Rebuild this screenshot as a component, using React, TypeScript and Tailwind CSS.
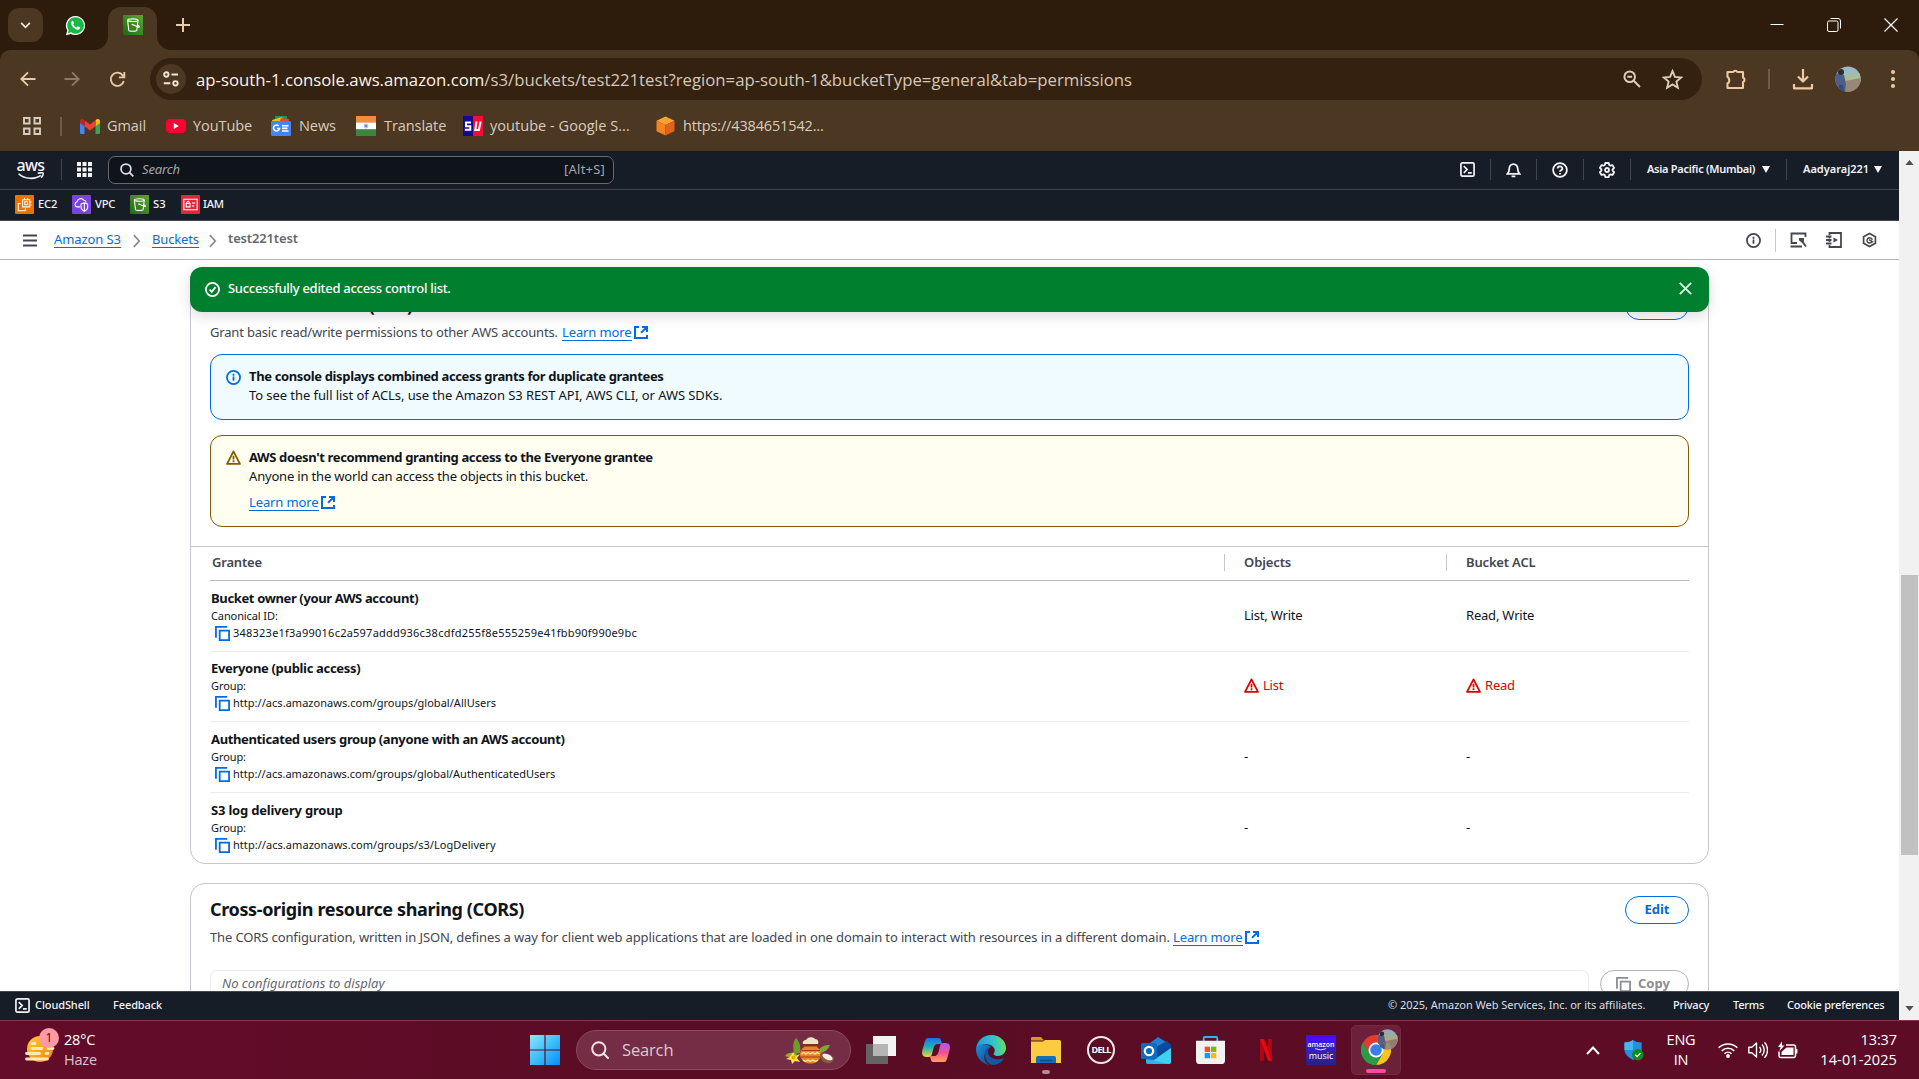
import type { ReactNode } from "react";

/* ---------- shared icons ---------- */

function BucketGlyph({ className }: { className?: string }) {
  return (
    <svg viewBox="0 0 20 20" className={className} fill="none" stroke="#fff" strokeWidth="1.1">
      <path d="M4.600 5.200 5.800 15.400C6 16.600 13.600 16.600 13.800 15.400L15 5.200" />
      <ellipse cx="9.800" cy="5.200" rx="5.200" ry="1.300" />
      <path d="M9.600 9.600 15.500 12.200C16.900 12.200 16.300 11 14.800 10.200" />
      <circle cx="9.400" cy="9.600" r=".8" fill="#fff" stroke="none" />
    </svg>
  );
}

function WarnIcon({ className }: { className?: string }) {
  return (
    <svg viewBox="0 0 16 16" className={className} fill="none" stroke="currentColor" strokeWidth="1.900" strokeLinejoin="round">
      <path d="M8 1.400 1.100 14.800H14.900Z" />
      <path d="M8 6v4M8 11v2" strokeLinejoin="miter" />
    </svg>
  );
}

function InfoIcon({ className }: { className?: string }) {
  return (
    <svg viewBox="0 0 16 16" className={className} fill="none" stroke="currentColor" strokeWidth="1.9">
      <circle cx="8" cy="8" r="7" />
      <path d="M8 11.5V7M8 6V4" />
    </svg>
  );
}

function ExternalIcon() {
  return (
    <svg viewBox="0 0 14 13" className="h-[13px] w-[14px] shrink-0" fill="none" stroke="currentColor" strokeWidth="2">
      <path d="M13 9v3H1V1H5M8 1h5V6M12.600 1.400 7 6.800" />
    </svg>
  );
}

function CopyIcon({ className }: { className?: string }) {
  return (
    <svg viewBox="0 0 16 16" className={className} fill="none" stroke="currentColor" strokeWidth="1.9">
      <path d="M5 5h10v10H5zM1 12.5V1H13" />
    </svg>
  );
}

function TerminalIcon({ className }: { className?: string }) {
  return (
    <svg viewBox="0 0 16 16" className={className} fill="none" stroke="currentColor" strokeWidth="1.8">
      <rect x="1" y="1" width="14" height="14" rx="1.5" />
      <path d="M4 4.5 7.6 8 4 11.5M8.5 11.6h4" />
    </svg>
  );
}

function Avatar({ className }: { className?: string }) {
  return (
    <svg viewBox="0 0 26 26" className={className}>
      <defs>
        <clipPath id="avatarClip"><circle cx="13" cy="13" r="12.6" /></clipPath>
      </defs>
      <g clipPath="url(#avatarClip)">
        <rect width="26" height="26" fill="#9db9c4" />
        <path d="M8 9 26 7V16H8Z" fill="#a9bd98" />
        <path d="M10 15 26 12V26H10Z" fill="#978878" />
        <path d="M0 8 5 7 9 9 11 18 10 26H3L0 20Z" fill="#4c5f86" />
        <circle cx="6" cy="6" r="3" fill="#2b2b33" />
        <path d="M4 19h4l1 7H4Z" fill="#2a4d86" />
      </g>
    </svg>
  );
}

/* ---------- browser chrome ---------- */

function TabStrip() {
  return (
    <div className="flex h-[50px] items-center bg-[#2d1c0b] text-[#e6cbaa]">
      <div className="ml-2 flex h-[34px] w-[35px] items-center justify-center rounded-[11px] bg-[#4b3722] text-[#f3e6d6]">
        <svg viewBox="0 0 12 8" className="h-[7px] w-[11px]" fill="none" stroke="currentColor" strokeWidth="2"><path d="m1 1 5 5 5-5" /></svg>
      </div>
      <div className="ml-[21px] flex h-[22px] w-[22px] items-center justify-center">
        <svg viewBox="0 0 24 24" className="h-[21px] w-[21px]">
          <path d="M12 1a11 11 0 0 0-9.4 16.6L1 23.2l5.7-1.5A11 11 0 1 0 12 1Z" fill="#fff" />
          <path d="M12 2.600a9.400 9.400 0 0 0-7.900 14.500L3.200 20.800l3.800-1A9.400 9.400 0 1 0 12 2.600Z" fill="#19b845" />
          <path d="M8.600 6.600c-.4 0-1.600.8-1.600 2.600 0 3.200 4.300 7.600 7.700 7.600 1.800 0 2.700-1 2.700-2.400l-2.700-1.500-1.400 1.500c-1.700-.6-3.200-2-4-3.700l1-1.300-1-2.600Z" fill="#fff" />
        </svg>
      </div>
      <div className="ml-[8px] flex h-[50px] items-end">
        <svg viewBox="0 0 14 14" className="h-[14px] w-[14px]"><path d="M14 0V14H0A14 14 0 0 0 14 0Z" fill="#4b3722" /></svg>
        <div className="flex h-[43px] w-[49px] items-center justify-center rounded-t-[13px] bg-[#4b3722] pb-[7px]">
          <div className="h-5 w-5 bg-linear-to-tr from-[#1d6b12] to-[#5ea534]"><BucketGlyph className="h-5 w-5" /></div>
        </div>
        <svg viewBox="0 0 14 14" className="h-[14px] w-[14px]"><path d="M0 0V14H14A14 14 0 0 1 0 0Z" fill="#4b3722" /></svg>
      </div>
      <svg viewBox="0 0 14 14" className="ml-[5px] h-[14px] w-[14px]" fill="none" stroke="currentColor" strokeWidth="2"><path d="M7 0v14M0 7h14" /></svg>
      <div className="ml-auto flex items-center gap-[43px] pr-[21px] text-white">
        <svg viewBox="0 0 14 14" className="h-[14px] w-[14px]" stroke="currentColor"><path d="M.5 6.500h13" /></svg>
        <svg viewBox="0 0 14 14" className="h-[14px] w-[14px]" fill="none" stroke="currentColor"><rect x=".5" y="3" width="10.500" height="10.500" rx="1.500" /><path d="M3.500.5H11a2.500 2.500 0 0 1 2.500 2.500v7.500" /></svg>
        <svg viewBox="0 0 14 14" className="h-[14px] w-[14px]" stroke="currentColor" strokeWidth="1.200"><path d="m.5.5 13 13M13.500.5l-13 13" /></svg>
      </div>
    </div>
  );
}

function Toolbar() {
  return (
    <div className="flex h-[58px] items-center rounded-t-[10px] bg-[#4b3722] text-[#e6cbaa]">
      <svg viewBox="0 0 16 16" className="ml-5 h-4 w-4" fill="none" stroke="currentColor" strokeWidth="1.900"><path d="M15.500 8H1.500M8 1.300 1.300 8 8 14.700" /></svg>
      <svg viewBox="0 0 16 16" className="ml-7 h-4 w-4 text-[#8d7964]" fill="none" stroke="currentColor" strokeWidth="1.900"><path d="M.5 8h14M8 1.300 14.700 8 8 14.700" /></svg>
      <svg viewBox="0 0 18 18" className="ml-[29px] h-[17px] w-[17px]" fill="none" stroke="currentColor" strokeWidth="2"><path d="M15.700 10.500A7 7 0 1 1 14.600 4.600L16 6.200M16.200 1v5.700h-5.700" /></svg>
      <div className="ml-[24px] flex h-[42px] w-[1552px] items-center rounded-full bg-[#34210f] pl-[6px]">
        <div className="flex h-[30px] w-[30px] items-center justify-center rounded-full bg-[#4b3722] text-[#f3e6d6]">
          <svg viewBox="0 0 16 16" className="h-4 w-4" fill="none" stroke="currentColor" strokeWidth="1.900"><circle cx="3.300" cy="3.500" r="2.200" /><path d="M8.500 3.500h6.500M.8 12.300h6.500" /><circle cx="12.500" cy="12.300" r="2.200" /></svg>
        </div>
        <div className="mt-px ml-[10px] w-[1420px] text-[16.750px] leading-6 whitespace-nowrap text-[#d5c8b9]">
          <span className="text-[#fdf3e7]">ap-south-1.console.aws.amazon.com</span>/s3/buckets/test221test?region=ap-south-1&amp;bucketType=general&amp;tab=permissions
        </div>
        <svg viewBox="0 0 18 18" className="ml-[7px] h-[18px] w-[18px] text-[#dccdbb]" fill="none" stroke="currentColor" strokeWidth="2"><circle cx="6.700" cy="6.700" r="5.300" /><path d="m10.700 10.700 6.300 6.300M4.300 6.700h4.800" /></svg>
        <svg viewBox="0 0 20 20" className="ml-[21px] h-[21px] w-[21px] text-[#dccdbb]" fill="none" stroke="currentColor" strokeWidth="1.800"><path d="m10 2 2.300 5.600 6 .5-4.600 3.900 1.400 5.900L10 14.700l-5.100 3.200L6.300 12 1.700 8.100l6-.5Z" /></svg>
      </div>
      <svg viewBox="0 0 22 22" className="ml-[23px] h-[22px] w-[22px] text-[#efc9a2]" fill="none" stroke="currentColor" strokeWidth="2.100" strokeLinejoin="round"><path d="M2.500 4H8.300A2.100 1.900 0 0 1 12.300 4H18V9.700A2 2.200 0 0 1 18 14V20H2.500V15.500A4 4 0 0 0 2.500 8.800Z" /></svg>
      <div className="ml-[21px] h-5 w-[2px] bg-[#735b43]" />
      <svg viewBox="0 0 22 22" className="ml-[22px] h-[22px] w-[22px] text-[#efc9a2]" fill="none" stroke="currentColor" strokeWidth="2.200"><path d="M11 1v12M6 8.500l5 5 5-5M2 16v4.300h18V16" strokeLinejoin="round" /></svg>
      <Avatar className="ml-[21px] h-[26px] w-[26px]" />
      <svg viewBox="0 0 4 18" className="ml-[30px] h-[18px] w-[4px]" fill="#efc9a2"><circle cx="2" cy="2" r="2" /><circle cx="2" cy="9" r="2" /><circle cx="2" cy="16" r="2" /></svg>
    </div>
  );
}

function Bookmark({ children, label, width }: { children: ReactNode; label: string; width: string }) {
  return (
    <div className={"flex items-center gap-2 " + width}>
      {children}
      <span className="whitespace-nowrap">{label}</span>
    </div>
  );
}

function Bookmarks() {
  return (
    <div className="flex h-[43px] items-start bg-[#4b3722] pt-[8px] text-[#d9cdbf]">
      <div className="flex h-5 items-center text-[14.500px] leading-5 tracking-[-0.06px]">
        <svg viewBox="0 0 18 18" className="ml-[23px] h-[18px] w-[18px]" fill="none" stroke="currentColor" strokeWidth="1.900"><path d="M1 1h5.500v5.500H1zM11.500 1H17v5.500h-5.500zM1 11.500h5.500V17H1zM11.500 11.500H17V17h-5.500z" /></svg>
        <div className="mr-[18px] ml-[19px] h-[19px] w-[2px] bg-[#735b43]" />
        <Bookmark label="Gmail" width="w-[86px]">
          <svg viewBox="0 0 20 15" className="-mr-px h-[15px] w-5">
            <path d="M0 2v11.500A1.500 1.500 0 0 0 1.500 15H4.500V6Z" fill="#4285f4" />
            <path d="M20 2v11.500A1.500 1.500 0 0 1 18.500 15H15.500V6Z" fill="#34a853" />
            <path d="M15.500 1.200V7.300L20 4V2.200C20 .2 17.800-.7 16.300.5Z" fill="#fbbc04" />
            <path d="M4.500 7.300V1.200L10 5.400 15.500 1.200V7.300L10 11.500Z" fill="#ea4335" />
            <path d="M0 2.200V4L4.500 7.300V1.200L3.700.5C2.200-.7 0 .2 0 2.200Z" fill="#c5221f" />
          </svg>
        </Bookmark>
        <Bookmark label="YouTube" width="w-[105px]">
          <svg viewBox="0 0 20 14" className="-mr-px h-[14px] w-5"><rect width="20" height="14" rx="4" fill="#ff0033" /><path d="M7.800 4v6l5-3Z" fill="#fff" /></svg>
        </Bookmark>
        <Bookmark label="News" width="w-[85px]">
          <svg viewBox="0 0 20 20" className="h-5 w-5">
            <path d="M4 0h12v6H4z" fill="#0c9d58" /><path d="m1 4 10-3 3 6H2z" fill="#fbbc04" /><path d="m10 2 8 1-1 5H8z" fill="#ea4335" />
            <rect y="5" width="20" height="15" rx="1.300" fill="#4285f4" />
            <path d="M6 12.500h2.500A3 3 0 1 1 7.800 10M11 9.800h6.500M11 12.400h5.500M11 15h6.500" fill="none" stroke="#fff" strokeWidth="1.600" />
          </svg>
        </Bookmark>
        <Bookmark label="Translate" width="w-[107px]">
          <svg viewBox="0 0 20 20" className="h-5 w-5"><path d="M0 0h20v6.700H0z" fill="#f28d3c" /><path d="M0 6.500h20v7H0z" fill="#fff" /><path d="M0 13.500h20V20H0z" fill="#3a863c" /><circle cx="10" cy="10" r="2.400" fill="#b9b9e0" /><circle cx="10" cy="10" r="1" fill="#7676b8" /></svg>
        </Bookmark>
        <Bookmark label="youtube - Google S..." width="w-[193px] tracking-[0.04px]">
          <svg viewBox="0 0 20 20" className="-mr-px h-5 w-5">
            <path d="M0 0h10v20H0z" fill="#120a8f" /><path d="M10 0h10v20H10z" fill="#fb0a33" />
            <path d="M8 6.500H3v3.700h4.300v3.600H1.800" fill="none" stroke="#fff" strokeWidth="2" />
            <path d="M13.500 5.500 12.300 14h3.600L17.600 5.500" fill="none" stroke="#fff" strokeWidth="2" />
          </svg>
        </Bookmark>
        <Bookmark label="https://4384651542..." width="w-[200px] tracking-[-0.15px]">
          <svg viewBox="0 0 20 20" className="h-5 w-[19px]"><path d="m10 0 9.500 4.500L10 9 .5 4.500Z" fill="#ffa02f" /><path d="M.5 4.500 10 9v11L.5 15.500Z" fill="#f58220" /><path d="M19.500 4.500 10 9v11l9.500-4.500Z" fill="#e2631c" /></svg>
        </Bookmark>
      </div>
    </div>
  );
}

/* ---------- AWS console header ---------- */

function NavSep() {
  return <div className="h-[21px] w-px bg-[#424650]" />;
}

function ConsoleHeader() {
  return (
    <header className="bg-[#161d27] text-[#f3f3f7]">
      <div className="flex h-[39px] items-center border-b border-[#424650] pb-px">
        <div className="ml-[15px] flex w-[31px] flex-col items-center">
          <span className="h-[12px] text-[16px] leading-[11px] font-medium tracking-[-0.6px]">aws</span>
          <svg viewBox="0 0 30 9" className="h-[8px] w-[30px]" fill="none" stroke="currentColor" strokeWidth="1.800"><path d="M1 2C8 8.500 20 8.500 26 3.800M22.500 1.500C25 .8 28 .6 28.500 1.300S28 4.500 26.500 6.500" /></svg>
        </div>
        <div className="ml-[15px]"><NavSep /></div>
        <svg viewBox="0 0 15 15" className="ml-[15px] h-[15px] w-[15px]" fill="currentColor"><path d="M0 0h4v4H0zM5.500 0h4v4h-4zM11 0h4v4h-4zM0 5.500h4v4H0zM5.500 5.500h4v4h-4zM11 5.500h4v4h-4zM0 11h4v4H0zM5.500 11h4v4h-4zM11 11h4v4h-4z" /></svg>
        <div className="ml-4 flex h-[28px] w-[506px] items-center rounded-[7px] border border-[#656871] bg-[#0f141a] pr-[8px] pl-[11px]">
          <svg viewBox="0 0 16 16" className="h-[14px] w-[14px] text-[#dedee3]" fill="none" stroke="currentColor" strokeWidth="2"><circle cx="6.800" cy="6.800" r="5.600" /><path d="m10.700 10.700 4.500 4.500" /></svg>
          <span className="ml-[8px] text-[13px] tracking-[-0.15px] text-[#a4a4ad] italic">Search</span>
          <span className="ml-auto text-[13px] tracking-[0.2px] text-[#a4a4ad]">[Alt+S]</span>
        </div>
        <div className="ml-auto flex items-center text-[11px] font-semibold">
          <TerminalIcon className="mr-[15px] h-[15px] w-[15px]" />
          <NavSep />
          <svg viewBox="0 0 16 16" className="mx-[15px] h-[16px] w-[15px]" fill="none" stroke="currentColor" strokeWidth="1.900"><path d="M1.500 12.200C3.500 10.500 3.500 8.500 3.500 6.500A4.500 4.800 0 0 1 12.500 6.500C12.500 8.500 12.500 10.500 14.500 12.200ZM6 14.700h4" /></svg>
          <NavSep />
          <svg viewBox="0 0 16 16" className="mx-[15px] h-[16px] w-[16px]" fill="none" stroke="currentColor" strokeWidth="1.800"><circle cx="8" cy="8" r="6.900" /><path d="M5.700 6.500A2.300 2.100 0 1 1 9 8.300Q8 8.700 8 9.700M8 11v1.600" /></svg>
          <NavSep />
          <svg viewBox="0 0 16 16" className="mx-[15px] h-[16px] w-[16px]" fill="none" stroke="currentColor" strokeWidth="1.800" strokeLinejoin="round"><path d="M6.300 1h3.400l.5 2 1.300.7 2-.6 1.600 2.800-1.500 1.500v1.300l1.500 1.500-1.600 2.800-2-.6-1.300.7-.5 2H6.300l-.5-2-1.300-.7-2 .6L.9 10.200l1.500-1.500V7.400L.9 5.900l1.600-2.800 2 .6L5.800 3Z" /><circle cx="8" cy="8" r="2" /></svg>
          <NavSep />
          <span className="ml-4 w-[115px] tracking-[-0.28px] whitespace-nowrap">Asia Pacific (Mumbai)</span>
          <svg viewBox="0 0 8 7" className="mr-4 h-[7px] w-[8px]" fill="currentColor"><path d="M0 0h8L4 7z" /></svg>
          <NavSep />
          <span className="ml-4 w-[71px] whitespace-nowrap">Aadyaraj221</span>
          <svg viewBox="0 0 8 7" className="mr-[17px] h-[7px] w-[8px]" fill="currentColor"><path d="M0 0h8L4 7z" /></svg>
        </div>
      </div>
      <div className="flex h-[31px] items-center border-b border-[#424650] pb-[2px] text-[11.200px] font-medium">
        <div className="ml-[15px] flex w-[57px] items-center gap-[4px]">
          <svg viewBox="0 0 20 20" className="h-[19px] w-[19px]"><rect width="20" height="20" rx="1" fill="#ed7100" /><g fill="none" stroke="#fff" strokeWidth="1.100"><path d="M8 5h7.500v7.500H8zM10.300 7.200h3v3h-3zM6 9H3.500v7.500H11V14M10 3v2M13.300 3v2M15.500 7.500h1.800M15.500 10.500h1.800" /></g></svg>
          <span className="tracking-[-0.2px]">EC2</span>
        </div>
        <div className="flex w-[58px] items-center gap-[4px]">
          <svg viewBox="0 0 20 20" className="h-[19px] w-[19px]"><rect width="20" height="20" rx="1" fill="#7a44df" /><g fill="none" stroke="#fff" strokeWidth="1.100"><path d="M8.500 12.500H5.500A2.700 2.700 0 0 1 5.300 7.200 4 4 0 0 1 12.500 5.500 2.600 2.600 0 0 1 15 7.700M9.500 9.500l3.500-1.200 3.500 1.200V13c0 2-1.500 3.300-3.500 4.200-2-.9-3.500-2.200-3.500-4.200ZM13 8.500v8.500" /></g></svg>
          <span className="tracking-[-0.2px]">VPC</span>
        </div>
        <div className="flex w-[51px] items-center gap-[4px]">
          <div className="h-[19px] w-[19px] rounded-[1px] bg-linear-to-tr from-[#1d6b12] to-[#5ea534]"><BucketGlyph className="h-[19px] w-[19px]" /></div>
          S3
        </div>
        <div className="flex w-[60px] items-center gap-[3px]">
          <svg viewBox="0 0 20 20" className="h-[19px] w-[19px]"><rect width="20" height="20" rx="1" fill="#e0283a" /><g fill="none" stroke="#fff" strokeWidth="1.100"><path d="M3 4.500h14v11H3zM5.500 9h4v3.500h-4zM6.300 9V7.800a1.200 1.200 0 0 1 2.400 0V9M11.500 8.500h3.500M11.500 11.500h2.500" /></g></svg>
          <span className="tracking-[-0.3px]">IAM</span>
        </div>
      </div>
    </header>
  );
}

function Crumb() {
  return <svg viewBox="0 0 9 15" className="mt-px h-[14px] w-[8px] text-[#8c8c94]" fill="none" stroke="currentColor" strokeWidth="2"><path d="m1 1 6 6.500L1 14" /></svg>;
}

function BreadcrumbBar() {
  return (
    <div className="flex h-[39px] items-center border-b border-[#b6b6bd] text-[13px] text-[#424650]">
      <svg viewBox="0 0 14 13" className="ml-[23px] h-[13px] w-[14px]" stroke="currentColor" strokeWidth="1.900"><path d="M0 1.500h14M0 6.500h14M0 11.500h14" /></svg>
      <div className="mb-[2px] ml-[17px] flex w-[79px] items-center"><span className="border-b border-[#006ce0] leading-[16px] tracking-[-0.1px] whitespace-nowrap text-[#006ce0]">Amazon S3</span></div>
      <Crumb />
      <div className="mb-[2px] ml-[11px] flex w-[57px]"><span className="border-b border-[#006ce0] leading-[16px] tracking-[-0.15px] text-[#006ce0]">Buckets</span></div>
      <Crumb />
      <span className="ml-[11px] pb-[2px] font-semibold tracking-[-0.15px] text-[#656871]">test221test</span>
      <div className="ml-auto flex items-center pr-[22px]">
        <InfoIcon className="mr-[14px] h-[15px] w-[15px]" />
        <div className="mr-[14px] h-[23px] w-px bg-[#c6c6cd]" />
        <svg viewBox="0 0 16 16" className="mr-[19px] h-[16px] w-[17px]" fill="none" stroke="currentColor" strokeWidth="1.800"><path d="M6.500 11H1V1.500h14V5M0 14.500h11.500M9 7.500 12 10l3.500 4.500M8.500 7h4V11" /></svg>
        <svg viewBox="0 0 16 16" className="mr-[20px] h-[16px] w-[16px]" fill="none" stroke="currentColor" strokeWidth="1.800"><path d="M3.500 3V1H15v14H3.500V13M3.500 5.500v1M3.500 9v1M0 4.500h5.500M0 8h5.500M0 11.500h5.500" /><path d="M7.500 5.500v5L12 8z" fill="currentColor" stroke="none" /></svg>
        <svg viewBox="0 0 16 16" className="h-[16px] w-[15px]" fill="none" stroke="currentColor" strokeWidth="1.800"><path d="m8 1 6.300 3.500v7L8 15l-6.300-3.500v-7Z" /><path d="M10.300 10.200A2.800 2.800 0 1 1 10.900 8M7.500 7.700l4.500 2.500" strokeWidth="1.500" /></svg>
      </div>
    </div>
  );
}

/* ---------- page content ---------- */

function LearnMore() {
  return (
    <span className="inline-flex items-center text-[#006ce0]">
      <span className="w-[70px] border-b border-[#006ce0] leading-[16px] tracking-[-0.12px] whitespace-nowrap">Learn more</span>
      <span className="ml-[2px]"><ExternalIcon /></span>
    </span>
  );
}

function EditButton() {
  return (
    <button className="h-[28px] w-[64px] rounded-full border-[1.500px] border-[#006ce0] bg-white text-[13px] leading-[23px] font-bold text-[#006ce0]">
      <span className="block h-[24px]">Edit</span>
    </button>
  );
}

function CardHeader({ title, children, size }: { title: string; children: ReactNode; size: string }) {
  return (
    <div className={"flex justify-between px-[19px] pt-[12px] " + size}>
      <div>
        <h2 className="h-[28px] text-[18px] leading-[26px] font-bold tracking-[-0.36px] whitespace-nowrap text-[#0f141a]">{title}</h2>
        <p className="mt-[4px] flex h-[20px] items-center text-[13px] whitespace-nowrap text-[#424650]">{children}</p>
      </div>
      <EditButton />
    </div>
  );
}

type Grantee = {
  name: string;
  nameClass: string;
  kind: string;
  id: string;
  idClass: string;
  objects: string;
  acl: string;
  warn?: boolean;
  rowClass: string;
};

const grantees: Grantee[] = [
  { name: "Bucket owner (your AWS account)", nameClass: "tracking-[-0.36px]", kind: "Canonical ID:", id: "348323e1f3a99016c2a597addd936c38cdfd255f8e555259e41fbb90f990e9bc", idClass: "tracking-[0.23px]", objects: "List, Write", acl: "Read, Write", rowClass: "h-[71px] border-b pb-[2px]" },
  { name: "Everyone (public access)", nameClass: "tracking-[-0.32px]", kind: "Group:", id: "http://acs.amazonaws.com/groups/global/AllUsers", idClass: "tracking-[0.03px]", objects: "List", acl: "Read", warn: true, rowClass: "h-[70px] border-b pb-[3px]" },
  { name: "Authenticated users group (anyone with an AWS account)", nameClass: "tracking-[-0.36px]", kind: "Group:", id: "http://acs.amazonaws.com/groups/global/AuthenticatedUsers", idClass: "tracking-[0.01px]", objects: "-", acl: "-", rowClass: "h-[71px] border-b pb-[2px]" },
  { name: "S3 log delivery group", nameClass: "tracking-[-0.2px]", kind: "Group:", id: "http://acs.amazonaws.com/groups/s3/LogDelivery", idClass: "tracking-[0.05px]", objects: "-", acl: "-", rowClass: "h-[70px] pb-[2px]" },
];

function Permission({ value, warn }: { value: string; warn?: boolean }) {
  return (
    <div className={warn ? "mt-px flex items-center gap-[4px] text-[#db0000]" : "mt-[2px] flex items-center"}>
      {warn && <WarnIcon className="h-[15px] w-[15px]" />}
      <span className="tracking-[-0.2px]">{value}</span>
    </div>
  );
}

function GranteeTable() {
  return (
    <div className="border-t border-[#c6c6cd] px-[19px] text-[13px] text-[#0f141a]">
      <div className="grid h-[34px] grid-cols-[1014px_222px_1fr] items-center border-b border-[#b6bec9] pb-[2px] font-semibold text-[#424650]">
        <span className="pl-[2px] tracking-[-0.2px]">Grantee</span>
        <span className="h-[17px] border-l border-[#c6c6cd] pl-[19px] leading-[16px] tracking-[-0.1px]">Objects</span>
        <span className="h-[17px] border-l border-[#c6c6cd] pl-[19px] leading-[16px] tracking-[-0.17px]">Bucket ACL</span>
      </div>
      {grantees.map((g) => (
        <div key={g.name} className={"grid grid-cols-[1014px_222px_1fr] items-center border-[#ebebf0] " + g.rowClass}>
          <div className="pl-px">
            <div className={"h-[19px] leading-[19px] font-bold " + g.nameClass}>{g.name}</div>
            <div className="h-[16px] text-[11px] leading-[16px] tracking-[-0.1px]">{g.kind}</div>
            <div className="flex h-[17px] items-center pl-[4px] text-[11px] leading-[17px]">
              <CopyIcon className="mt-px mr-[3px] h-[15px] w-[15px] text-[#006ce0]" />
              <span className={g.idClass}>{g.id}</span>
            </div>
          </div>
          <div className="pl-[20px]"><Permission value={g.objects} warn={g.warn} /></div>
          <div className="pl-[20px]"><Permission value={g.acl} warn={g.warn} /></div>
        </div>
      ))}
    </div>
  );
}

function Flash() {
  return (
    <div className="absolute top-[7px] right-[190px] left-[190px] flex h-[45px] items-center rounded-[12px] bg-[#00802f] text-[13px] font-medium text-white shadow-[0_4px_14px_rgba(0,7,22,0.14)]">
      <svg viewBox="0 0 16 16" className="ml-[15px] h-[15px] w-[15px]" fill="none" stroke="currentColor" strokeWidth="1.900"><circle cx="8" cy="8" r="7" /><path d="m4.800 8 2.400 2.500 4-5" /></svg>
      <span className="mb-[2px] ml-[8px] tracking-[-0.29px]">Successfully edited access control list.</span>
      <svg viewBox="0 0 13 13" className="mr-[17px] mb-[2px] ml-auto h-[13px] w-[13px]" fill="none" stroke="#dff0e4" strokeWidth="1.900"><path d="m.8.8 11.400 11.400M12.200.8.8 12.200" /></svg>
    </div>
  );
}

function Content() {
  return (
    <main className="relative h-[731px] overflow-hidden bg-white px-[190px] pt-[19px]">
      <section className="rounded-[15px] border border-[#c6c6cd]">
        <CardHeader title="Access control list (ACL)" size="h-[74px]">
          <span className="mr-[5px] mb-[2px] w-[347px] tracking-[-0.18px]">Grant basic read/write permissions to other AWS accounts.</span>
          <span className="-mt-[3px] flex"><LearnMore /></span>
        </CardHeader>
        <div className="px-[19px]">
          <div className="flex h-[66px] rounded-[12px] border-[1.500px] border-[#006ce0] bg-[#f0fbff] pt-[12px] pl-[15px] text-[13px] text-[#0f141a]">
            <InfoIcon className="mt-[3px] h-[15px] w-[15px] text-[#006ce0]" />
            <div className="ml-[8px] leading-[19px]">
              <div className="font-bold tracking-[-0.36px]">The console displays combined access grants for duplicate grantees</div>
              <div className="tracking-[-0.07px]">To see the full list of ACLs, use the Amazon S3 REST API, AWS CLI, or AWS SDKs.</div>
            </div>
          </div>
          <div className="mt-[15px] flex h-[92px] rounded-[12px] border-[1.500px] border-[#855900] bg-[#fffef0] pt-[12px] pl-[15px] text-[13px] text-[#0f141a]">
            <WarnIcon className="mt-[2px] h-[15px] w-[15px] text-[#855900]" />
            <div className="ml-[8px] leading-[19px]">
              <div className="font-bold tracking-[-0.37px]">AWS doesn't recommend granting access to the Everyone grantee</div>
              <div className="tracking-[-0.18px]">Anyone in the world can access the objects in this bucket.</div>
              <div className="mt-[8px] flex"><LearnMore /></div>
            </div>
          </div>
        </div>
        <div className="mt-[19px]"><GranteeTable /></div>
      </section>

      <section className="mt-[19px] h-[160px] rounded-[15px] border border-[#c6c6cd]">
        <CardHeader title="Cross-origin resource sharing (CORS)" size="h-[75px]">
          <span className="mr-[4px] w-[959px] tracking-[-0.121px]">The CORS configuration, written in JSON, defines a way for client web applications that are loaded in one domain to interact with resources in a different domain.</span>
          <span className="-mt-px flex"><LearnMore /></span>
        </CardHeader>
        <div className="mt-[11px] flex justify-between px-[19px]">
          <div className="h-[60px] w-[1379px] rounded-[7px] border border-[#ebebf0] pt-[3px] pl-[11px] text-[13px] leading-[19px] tracking-[-0.01px] text-[#656871] italic">No configurations to display</div>
          <button className="flex h-[28px] w-[89px] items-center rounded-full border-[1.500px] border-[#b4b4bb] pl-[15px] text-[13px] font-bold text-[#8c8c94]">
            <CopyIcon className="h-[15px] w-[15px]" />
            <span className="ml-[7px]">Copy</span>
          </button>
        </div>
      </section>
      <Flash />
    </main>
  );
}

function Footer() {
  return (
    <footer className="flex h-[29px] items-center border-t border-[#424650] bg-[#161d27] pb-px text-[11px] font-medium whitespace-nowrap text-[#f3f3f7]">
      <TerminalIcon className="ml-[15px] h-[15px] w-[15px]" />
      <span className="ml-[5px] w-[78px] tracking-[-0.1px]">CloudShell</span>
      <span className="tracking-[-0.1px]">Feedback</span>
      <span className="ml-auto w-[285px] font-normal tracking-[-0.03px] text-[#dedee3]">© 2025, Amazon Web Services, Inc. or its affiliates.</span>
      <span className="w-[60px] tracking-[-0.2px]">Privacy</span>
      <span className="w-[54px] tracking-[-0.2px]">Terms</span>
      <span className="w-[112px] tracking-[-0.21px]">Cookie preferences</span>
    </footer>
  );
}

function Scrollbar() {
  return (
    <div className="flex w-5 shrink-0 flex-col items-center bg-[#f1f1f1] pt-[9px]">
      <svg viewBox="0 0 10 6" className="h-[5px] w-[9px]" fill="#505050"><path d="M0 6h10L5 0z" /></svg>
      <div className="mt-[410px] h-[280px] w-[17px] bg-[#c1c1c1]" />
      <svg viewBox="0 0 10 6" className="mt-[151px] h-[5px] w-[9px]" fill="#505050"><path d="M0 0h10L5 6z" /></svg>
    </div>
  );
}

/* ---------- Windows taskbar ---------- */

function Pot() {
  return (
    <svg viewBox="0 0 52 28" className="h-[28px] w-[52px]">
      <path d="M11 18C9 9 11 4 13 2c4 4 5 9 4 15Z" fill="#6f9a2c" />
      <path d="M2 20c3-4 7-4 12-2l-3 5Z" fill="#8fb13b" />
      <path d="M35 15c3-5 7-6 12-6-2 5-6 8-11 8Z" fill="#7fa436" />
      <path d="M21 9.500H34V11C38 14 39 18 37 22 35 26 32 27.500 27.500 27.500S20 26 18 22C16 18 17 14 21 11Z" fill="#dd8a22" />
      <path d="M18.500 14.500h18.500M18 21h19" stroke="#b5351b" strokeWidth="1.200" fill="none" />
      <path d="m18.500 18 2.200-1.500 2.200 1.500 2.300-1.500 2.300 1.500 2.300-1.500 2.300 1.500 2.200-1.500 2.200 1.500M20 24l2.500 1.500L25 24l2.500 1.500L30 24l2.500 1.500L35 24" stroke="#ffe9a8" strokeWidth="1.200" fill="none" />
      <path d="M19 9.500h17" stroke="#8f2c16" strokeWidth="2" strokeLinecap="round" />
      <path d="M20 8c-1-2 1-4 3-4 1-3 7-4 9-1 3 0 4 3 3 5Z" fill="#f1e2c4" />
      <path d="m10 16 2 4 5-2-3 4 3 4-5-1-3 3-1-4-5-1 4-2Z" fill="#ffe14a" />
      <circle cx="10.500" cy="21.500" r="2" fill="#e9a800" />
      <path d="M37 18c3-2 10-1 14 4 0 4-4 6-8 5s-6-5-6-9Z" fill="#8b5b3c" />
      <ellipse cx="44.500" cy="21" rx="5.500" ry="2.600" fill="#f7efe6" transform="rotate(24 44.500 21)" />
    </svg>
  );
}

function Taskbar() {
  return (
    <div className="flex h-[59px] items-center border-t border-[#7d3a4d] bg-linear-to-r from-[#640c2a] from-0% via-[#5a0c25] via-35% to-[#5d0c26] text-white">
      <div className="relative ml-[25px] h-[30px] w-[30px]">
        <svg viewBox="0 0 30 30" className="h-[30px] w-[30px]">
          <defs><linearGradient id="sun" x1="0" y1="0" x2="1" y2="1"><stop offset="0" stopColor="#ffcf2e" /><stop offset="1" stopColor="#f07f13" /></linearGradient></defs>
          <circle cx="15" cy="14" r="13" fill="url(#sun)" />
          <path d="M7 8.500h3M7 13.500h10M23 13.500h5M1.500 18.500h13M21 18.500h2M1.500 24h21" stroke="#ffe9b5" strokeWidth="2.800" strokeLinecap="round" />
        </svg>
        <span className="absolute -top-[7px] left-[14px] flex h-5 w-5 items-center justify-center rounded-full bg-[#ff99a4] text-[12px] text-[#2b0a12]">1</span>
      </div>
      <div className="ml-[9px] w-[465px] text-[14.500px] leading-[20px] tracking-[-0.2px]">
        <div>28°C</div>
        <div className="text-[#dcc5cc]">Haze</div>
      </div>
      <svg viewBox="0 0 30 30" className="ml-px h-[30px] w-[30px]">
        <defs><linearGradient id="win" x1="0" y1="0" x2="1" y2="1"><stop offset="0" stopColor="#8fe3ff" /><stop offset=".5" stopColor="#3cc0f8" /><stop offset="1" stopColor="#0a8cf5" /></linearGradient></defs>
        <path d="M0 0h14.400v14.400H0zM15.600 0H30v14.400H15.600zM0 15.600h14.400V30H0zM15.600 15.600H30V30H15.600z" fill="url(#win)" />
      </svg>
      <div className="ml-[16px] flex h-[40px] w-[275px] items-center rounded-full border border-[#8b4a5e] bg-[#742d45] pl-[14px]">
        <svg viewBox="0 0 18 18" className="h-[18px] w-[18px]" fill="none" stroke="#f0e3e7" strokeWidth="2" strokeLinecap="round"><circle cx="7.800" cy="7.800" r="6.600" /><path d="m12.800 12.800 4.200 4.200" /></svg>
        <span className="ml-[13px] w-[161px] text-[16.500px] tracking-[-0.15px] text-[#dccad0]">Search</span>
        <Pot />
      </div>
      <svg viewBox="0 0 30 28" className="ml-[15px] h-[28px] w-[30px]"><path d="M0 8h22v20H0z" fill="#646464" /><path d="M7 0h23v20H7z" fill="#f3f3f3" /><path d="M7 8h15v12H7z" fill="#b5b5b5" /></svg>
      <svg viewBox="0 0 28 26" className="ml-[26px] h-[26px] w-[28px]">
        <defs>
          <linearGradient id="cpa" x1="0" y1="0" x2="0" y2="1"><stop offset="0" stopColor="#1c6fe8" /><stop offset=".5" stopColor="#22b5b0" /><stop offset="1" stopColor="#f2d13a" /></linearGradient>
          <linearGradient id="cpb" x1="0" y1="0" x2="0" y2="1"><stop offset="0" stopColor="#a95bf0" /><stop offset=".5" stopColor="#f0509a" /><stop offset="1" stopColor="#ffa15a" /></linearGradient>
        </defs>
        <path d="M6 1h10c3 0 3 2 4 6h-4c-3 0-4 2-5 6l-1 4c-1 3-2 3-5 3-5 0-6-3-4-9l2-7c1-2 1-3 3-3Z" fill="url(#cpa)" />
        <path d="M22 25H12c-3 0-3-2-4-6h4c3 0 4-2 5-6l1-4c1-3 2-3 5-3 5 0 6 3 4 9l-2 7c-1 2-1 3-3 3Z" fill="url(#cpb)" />
      </svg>
      <svg viewBox="0 0 30 30" className="ml-[26px] h-[30px] w-[30px]">
        <defs>
          <linearGradient id="eda" x1="0" y1=".3" x2="1" y2=".2"><stop offset="0" stopColor="#1b9de2" /><stop offset=".6" stopColor="#35c6c6" /><stop offset="1" stopColor="#6ee04e" /></linearGradient>
          <linearGradient id="edb" x1="0" y1="0" x2="1" y2="1"><stop offset="0" stopColor="#1a8fdb" /><stop offset="1" stopColor="#0c4a93" /></linearGradient>
        </defs>
        <path d="M0 14C1 5 8 0 15 0c9 0 15 6 15 13 0 5-4 8-8 8-4 0-5-2-4-3 1-2 1-3 0-5-2-4-13-6-18 1Z" fill="url(#eda)" />
        <path d="M0 14c0 9 7 16 15 16-6-1-8-7-6-12 1-3 3-5 6-6-4-4-13-4-15 2Z" fill="url(#edb)" />
        <path d="M9 17c-1 7 3 13 9 13 5-1 8-3 10-7-3 1-6 2-9 1-4-1-7-3-7-8 0-2 1-3 3-4-3 0-5 2-6 5Z" fill="#12589f" />
      </svg>
      <div className="relative ml-[25px] h-[26px] w-[30px]">
        <svg viewBox="0 0 30 26" className="h-[26px] w-[30px]"><path d="M0 1.500C0 .5.500 0 1.500 0H10l3 3.500H0Z" fill="#dd9a0a" /><path d="M0 4.500h12l2-1.500h14.500A1.500 1.500 0 0 1 30 4.500V26H0Z" fill="#fccb3f" /><path d="M5 26v-5a2 2 0 0 1 2-2h16a2 2 0 0 1 2 2v5Z" fill="#1170b8" /><path d="M9 23.500h12" stroke="#0b4d86" strokeWidth="1.400" /></svg>
        <div className="absolute top-[33px] left-[11px] h-[4px] w-[8px] rounded-full bg-[#b58a98]" />
      </div>
      <div className="ml-[26px] flex h-[28px] w-[28px] items-center justify-center rounded-full border-[2px] border-[#f3e9ec] text-[9px] font-bold tracking-[-0.7px]">DELL</div>
      <svg viewBox="0 0 30 27" className="ml-[26px] h-[27px] w-[30px]"><path d="M5 9 17 0l13 8v17a2 2 0 0 1-2 2H7a2 2 0 0 1-2-2Z" fill="#1d7fd6" /><path d="M15 10 26 4l4 4v4L12 25Z" fill="#0c4a9c" /><path d="M30 11v14a2 2 0 0 1-2 2H7Z" fill="#42d0ef" /><path d="M5 22v3a2 2 0 0 0 2 2h21Z" fill="#2eb3ea" /><rect y="6" width="16" height="16" rx="1.500" fill="#0f6cbd" /><circle cx="8" cy="14" r="4.200" fill="none" stroke="#fff" strokeWidth="2.200" /></svg>
      <svg viewBox="0 0 30 30" className="ml-[25px] h-[29px] w-[29px]"><path d="M8 6V2a1 1 0 0 1 1-1h12a1 1 0 0 1 1 1v4" fill="none" stroke="#2bb5ee" strokeWidth="2" /><path d="M0 5h30v20a4 4 0 0 1-4 4H4a4 4 0 0 1-4-4Z" fill="#f2f2f2" /><path d="M9 11h5.500v5.500H9z" fill="#f25022" /><path d="M15.500 11H21v5.500h-5.500z" fill="#7fba00" /><path d="M9 17.500h5.500V23H9z" fill="#00a4ef" /><path d="M15.500 17.500H21V23h-5.500z" fill="#ffb900" /></svg>
      <svg viewBox="0 0 12 22" className="ml-[35px] h-[22px] w-[12px]"><path d="M0 0h4v21.500L0 22ZM8 0h4v22l-4-.5Z" fill="#b1060f" /><path d="M0 0h4l8 22-4-.5Z" fill="#e50914" /></svg>
      <div className="ml-[34px] flex h-[30px] w-[30px] flex-col items-center justify-center bg-linear-to-b from-[#4a08ff] to-[#2a1f80] text-[7px] font-semibold">
        <span className="h-[7px] leading-[7px]">amazon</span>
        <svg viewBox="0 0 14 3" className="h-[3px] w-[12px]" fill="none" stroke="#fff"><path d="M0 .5Q7 3.500 13 .5" /></svg>
        <span className="text-[9px] leading-[9px] font-normal">music</span>
      </div>
      <div className="relative ml-[15px] flex h-[50px] w-[50px] items-center justify-center rounded-[5px] border border-[#732b42] bg-[#6d2039]">
        <svg viewBox="0 0 48 48" className="h-[30px] w-[30px]">
          <path d="M24 24 3.200 12A24 24 0 0 1 44.800 12Z" fill="#e33b2e" />
          <path d="M24 24 24 48A24 24 0 0 1 3.200 12L13.600 30Z" fill="#2a9b46" />
          <path d="M24 24 44.800 12A24 24 0 0 1 24 48L34.400 30Z" fill="#fcc31e" />
          <path d="M24 12H44.800L34.400 30Z" fill="#fcc31e" /><path d="M3.200 12 13.600 30 24 12Z" fill="#e33b2e" /><path d="M13.600 30 24 48 34.400 30Z" fill="#2a9b46" />
          <path d="M24 12H44.800A24 24 0 0 0 24 0Z" fill="#e33b2e" /><path d="M13.600 30 3.200 12A24 24 0 0 0 24 48Z" fill="#2a9b46" />
          <circle cx="24" cy="24" r="12" fill="#fff" /><circle cx="24" cy="24" r="9.300" fill="#3b7ded" />
        </svg>
        <Avatar className="absolute top-[3px] left-[25px] h-[21px] w-[21px] opacity-90" />
        <div className="absolute bottom-[1px] left-[14px] h-[4px] w-[20px] rounded-full bg-[#ff4aa0]" />
      </div>
      <svg viewBox="0 0 14 9" className="ml-[185px] h-[9px] w-[14px]" fill="none" stroke="currentColor" strokeWidth="2"><path d="m1 8 6-6.500L13 8" /></svg>
      <svg viewBox="0 0 20 22" className="ml-[24px] h-[21px] w-[20px]"><path d="M9 0c3 2 6 2.500 9 2.500V10c0 5-4 8-9 11C4 18 0 15 0 10V2.500C3 2.500 6 2 9 0Z" fill="#2490dd" /><path d="M9 0v10.500H0V2.500C3 2.500 6 2 9 0Z" fill="#43b8f2" /><circle cx="14" cy="15.500" r="6" fill="#12891d" /><path d="m11.300 15.500 2 2 3.500-3.800" fill="none" stroke="#fff" strokeWidth="1.300" /></svg>
      <div className="ml-[17px] w-[40px] text-center text-[14.500px] leading-[20px] tracking-[-0.2px]">
        <div>ENG</div>
        <div>IN</div>
      </div>
      <svg viewBox="0 0 20 16" className="ml-[17px] h-[16px] w-[20px]" fill="none" stroke="currentColor" strokeWidth="1.500"><path d="M.7 5.800a13 13 0 0 1 18.600 0M3.700 8.900a9 9 0 0 1 12.600 0M6.500 11.700a5 5 0 0 1 7 0" /><circle cx="10" cy="14" r="1.900" fill="currentColor" stroke="none" /></svg>
      <svg viewBox="0 0 20 18" className="ml-[10px] h-[18px] w-[20px]" fill="none" stroke="currentColor" strokeWidth="1.400" strokeLinejoin="round"><path d="M.8 6.300h3L8.500 2v14l-4.700-4.300h-3ZM11.500 6a4.500 4.500 0 0 1 0 6M14 3.500a8 8 0 0 1 0 11M16.500 1.200a11.500 11.500 0 0 1 0 15.600" /></svg>
      <svg viewBox="0 0 20 18" className="ml-[10px] h-[19px] w-[20px]" fill="none" stroke="currentColor" strokeWidth="1.500"><path d="M8 3.500h7.500A2 2 0 0 1 17.500 5.500v8.500a2 2 0 0 1-2 2H3A2 2 0 0 1 1 14V10M18.700 7.500v4.500" /><path d="M3.500 13.500V10.500l5-4.500H15.500V13.500Z" fill="currentColor" stroke="none" /><path d="M4 0 0 5.500h2.500L1.500 9.500 6.500 4H4Z" fill="currentColor" stroke="none" /></svg>
      <div className="ml-auto pr-[22px] text-right text-[14.500px] leading-[20px]">
        <div className="tracking-[-0.1px]">13:37</div>
        <div className="tracking-[0.1px]">14-01-2025</div>
      </div>
    </div>
  );
}

export default function App() {
  return (
    <div className="flex h-[1079px] w-[1919px] flex-col overflow-hidden bg-[#2d1c0b] font-['Open_Sans',sans-serif]">
      <TabStrip />
      <Toolbar />
      <Bookmarks />
      <div className="flex h-[869px]">
        <div className="flex w-[1899px] flex-col bg-white font-['Noto_Sans',sans-serif]">
          <ConsoleHeader />
          <BreadcrumbBar />
          <Content />
          <Footer />
        </div>
        <Scrollbar />
      </div>
      <Taskbar />
    </div>
  );
}
